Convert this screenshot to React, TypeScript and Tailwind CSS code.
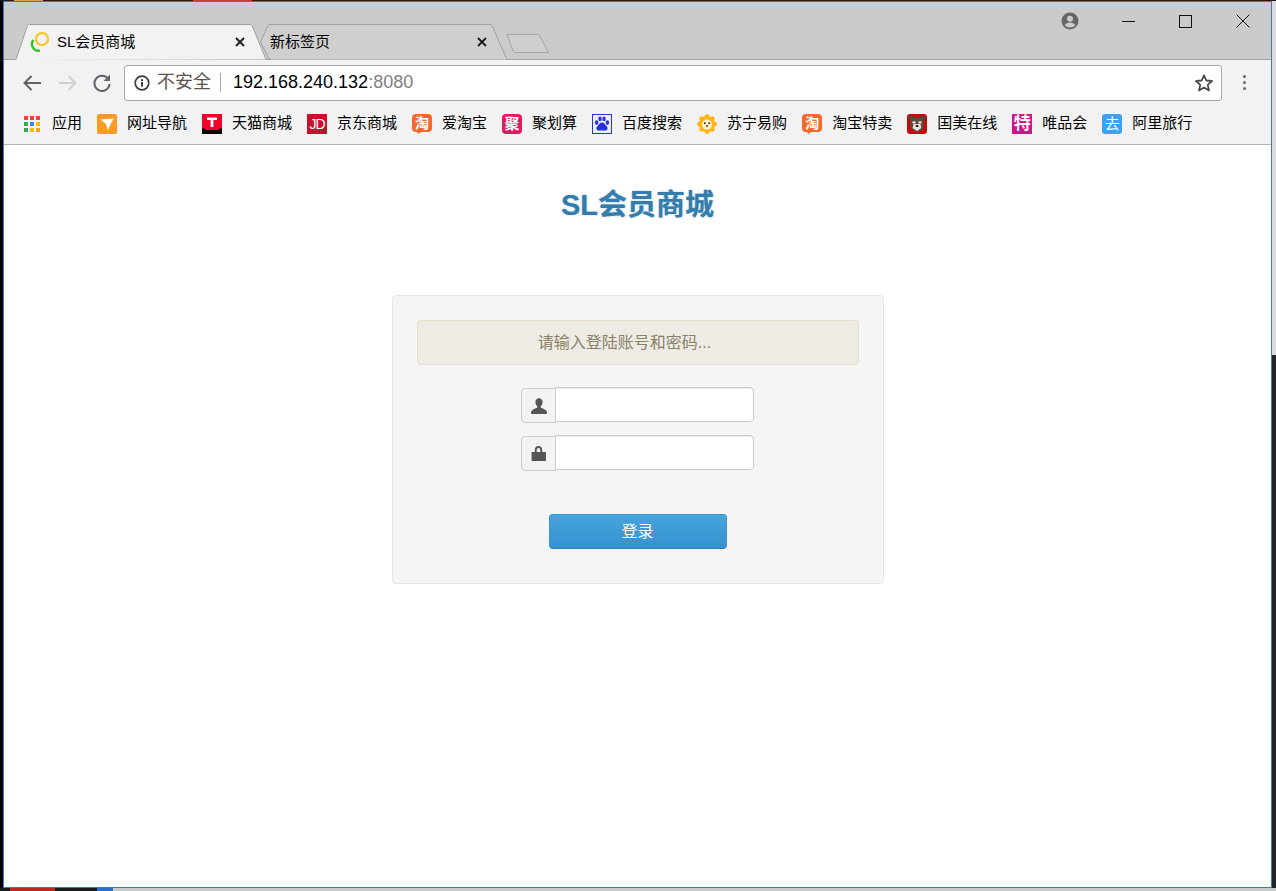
import type { ReactNode } from "react";

const CJK = "font-['Liberation_Sans','Noto_Sans_CJK_SC',sans-serif]";

function AppsIcon() {
  const colors = ["#e8453c", "#e8453c", "#e8453c", "#34a853", "#4285f4", "#fbbc05", "#34a853", "#fbbc05", "#f9a602"];
  return (
    <div className="grid h-4 w-4 grid-cols-3 gap-[2px]">
      {colors.map((c, i) => (
        <span key={i} style={{ background: c }} />
      ))}
    </div>
  );
}

function Square({ bg, children, className = "" }: { bg: string; children: ReactNode; className?: string }) {
  return (
    <div
      className={`flex h-5 w-5 items-center justify-center overflow-hidden font-bold leading-none text-white ${className}`}
      style={{ background: bg }}
    >
      {children}
    </div>
  );
}

function TaoIcon() {
  return (
    <div className="relative h-5 w-5">
      <div className="flex h-[18px] w-5 items-center justify-center rounded-[4px] bg-[#f5692c] text-[14px] font-bold leading-none text-white">淘</div>
      <svg className="absolute bottom-0 left-[5px]" width="6" height="3" viewBox="0 0 6 3">
        <path d="M0 0h6L1 3z" fill="#f5692c" />
      </svg>
    </div>
  );
}

function NavIcon() {
  return (
    <div className="h-5 w-5 rounded-[2px] bg-[#f99a26]">
      <svg width="20" height="20" viewBox="0 0 20 20">
        <path d="M3.500 5.500L16.500 4.500L10.500 16.500L9 10z" fill="#fff" />
      </svg>
    </div>
  );
}

function TmallIcon() {
  return (
    <div className="flex h-5 w-5 flex-col">
      <svg width="20" height="20" viewBox="0 0 20 20">
        <rect width="20" height="20" fill="#000" />
        <path d="M0 0h20v14l-3 1-1 1H4l-1-1-3-1z" fill="#f0022a" />
        <path d="M5 3.500h10v2.400h-3.600V13H8.600V5.900H5z" fill="#fff" />
      </svg>
    </div>
  );
}

function BaiduIcon() {
  return (
    <div className="h-5 w-5 border border-[#2932e1] bg-white">
      <svg width="18" height="18" viewBox="0 0 18 18">
        <rect width="18" height="18" fill="#eef0ff" />
        <g fill="#2932e1">
          <ellipse cx="3.600" cy="7.600" rx="1.700" ry="2.300" />
          <ellipse cx="7" cy="3.900" rx="1.700" ry="2.400" />
          <ellipse cx="11" cy="3.900" rx="1.700" ry="2.400" />
          <ellipse cx="14.400" cy="7.600" rx="1.700" ry="2.300" />
          <path d="M9 7.600c2 0 2.800 1.700 4 3 1.200 1.200 2 2.200 1.400 3.700-.6 1.300-2 1.600-3.300 1.300-1.400-.3-2.800-.3-4.200 0-1.300.3-2.700 0-3.300-1.300-.6-1.500.2-2.500 1.400-3.700 1.200-1.300 2-3 4-3z" />
        </g>
      </svg>
    </div>
  );
}

function SuningIcon() {
  return (
    <svg width="20" height="20" viewBox="0 0 20 20">
      <g fill="#fdb515">
        <circle cx="10" cy="10" r="7.500" />
        <circle cx="10" cy="2.800" r="2.600" />
        <circle cx="10" cy="17.200" r="2.600" />
        <circle cx="2.800" cy="10" r="2.600" />
        <circle cx="17.200" cy="10" r="2.600" />
        <circle cx="4.900" cy="4.900" r="2.600" />
        <circle cx="15.100" cy="4.900" r="2.600" />
        <circle cx="4.900" cy="15.100" r="2.600" />
        <circle cx="15.100" cy="15.100" r="2.600" />
      </g>
      <circle cx="10" cy="10.600" r="5" fill="#fff3d6" />
      <circle cx="7.800" cy="9.200" r="1" fill="#4a2c10" />
      <circle cx="12.200" cy="9.200" r="1" fill="#4a2c10" />
      <path d="M8.400 11.200h3.200L10 13.400z" fill="#8a3c10" />
    </svg>
  );
}

function GomeIcon() {
  return (
    <svg width="20" height="20" viewBox="0 0 20 20">
      <rect width="20" height="20" rx="3" fill="#c00d0d" />
      <circle cx="4.200" cy="4.200" r="2.400" fill="#5a4338" />
      <circle cx="15.800" cy="4.200" r="2.400" fill="#5a4338" />
      <path d="M4 4h12l1 6-2 6-5 2.500L5 16l-2-6z" fill="#5f4a40" />
      <path d="M6.500 10h7l.8 4-4.300 3-4.300-3z" fill="#ece4da" />
      <rect x="5.500" y="7.400" width="3" height="2" fill="#f2ece4" />
      <rect x="11.500" y="7.400" width="3" height="2" fill="#f2ece4" />
      <rect x="8.700" y="11" width="2.600" height="2" fill="#2a1c16" />
    </svg>
  );
}

const bookmarks: { label: string; icon: ReactNode }[] = [
  { label: "应用", icon: <AppsIcon /> },
  { label: "网址导航", icon: <NavIcon /> },
  { label: "天猫商城", icon: <TmallIcon /> },
  { label: "京东商城", icon: <Square bg="#c5112b" className="font-['Liberation_Sans'] text-[14px] font-normal tracking-[-1px] text-[#f6d5d8]">JD</Square> },
  { label: "爱淘宝", icon: <TaoIcon /> },
  { label: "聚划算", icon: <Square bg="#e5195f" className="rounded-[4px] text-[15px]">聚</Square> },
  { label: "百度搜索", icon: <BaiduIcon /> },
  { label: "苏宁易购", icon: <SuningIcon /> },
  { label: "淘宝特卖", icon: <TaoIcon /> },
  { label: "国美在线", icon: <GomeIcon /> },
  { label: "唯品会", icon: <Square bg="#d5118b" className="text-[17px]">特</Square> },
  { label: "阿里旅行", icon: <Square bg="#3f9ff0" className="rounded-[3px] text-[15px] font-normal">去</Square> },
];

function Favicon() {
  return (
    <svg width="22" height="20" viewBox="0 0 22 20" fill="none">
      <circle cx="13" cy="7" r="6" stroke="#f7c92a" strokeWidth="2.400" />
      <path d="M4.500 8A6.500 6.500 0 0 0 11 18.500" stroke="#35c52f" strokeWidth="2.400" />
    </svg>
  );
}

function CloseX() {
  return (
    <svg width="10" height="10" viewBox="0 0 10 10">
      <path d="M1 1l8 8M9 1l-8 8" stroke="#1a1a1a" strokeWidth="1.800" />
    </svg>
  );
}

function Tab({ active, title, fav }: { active?: boolean; title: string; fav?: ReactNode }) {
  return (
    <div className={`relative flex h-9 w-64 items-center ${active ? "z-10" : "-ml-4"}`}>
      <svg className="absolute inset-0" width="256" height="36" viewBox="0 0 256 36">
        {active ? (
          <path d="M0.500 36L1 35.500h3L15.500 1.500a2 2 0 0 1 2-1H238a2 2 0 0 1 2 1L254 35.500h2" fill="#f2f2f2" stroke="#a0a0a0" />
        ) : (
          <path d="M19 35.500a3 3 0 0 1-2.500-1.500L8.500 18 16 1.500a2 2 0 0 1 2-1H238a2 2 0 0 1 2 1L255 35.500" fill="#cfcfcf" stroke="#a0a0a0" />
        )}
      </svg>
      <div className={`relative flex flex-1 items-center text-[15px] text-black ${active ? "pl-[17px] pr-[23px]" : "pl-[18px] pr-[21px]"}`}>
        {fav && <span className="mr-[6px] flex">{fav}</span>}
        <span className="flex-1">{title}</span>
        <CloseX />
      </div>
    </div>
  );
}

function WinButton({ children, className = "" }: { children: ReactNode; className?: string }) {
  return <div className={`flex h-[38px] w-[57px] items-center justify-center ${className}`}>{children}</div>;
}

function TabStrip() {
  return (
    <div className="flex h-[58px] items-start justify-between border-b border-[#a3a3a3] bg-[#cbcbcb]">
      <div className="flex items-end pl-2 pt-[22px]">
        <Tab active title="SL会员商城" fav={<Favicon />} />
        <Tab title="新标签页" />
        <svg className="-ml-[2px] mb-[6px]" width="44" height="21" viewBox="0 0 44 21">
          <path d="M1 1.500h31a2 2 0 0 1 1.600 1L42.500 19.500H9a2 2 0 0 1-1.600-1z" fill="#cfcfcf" stroke="#a5a5a5" />
        </svg>
      </div>
      <div className="flex">
        <WinButton className="pr-1">
          <svg width="18" height="18" viewBox="0 0 18 18">
            <circle cx="9" cy="9" r="8.500" fill="#666" />
            <circle cx="9" cy="6.800" r="3" fill="#ccc" />
            <path d="M3.600 13c1.200-1.800 3.400-2.600 5.400-2.600s4.200.8 5.400 2.600A6.800 6.800 0 0 1 9 15.600 6.800 6.800 0 0 1 3.600 13z" fill="#ccc" />
          </svg>
        </WinButton>
        <WinButton>
          <div className="h-px w-[13px] bg-[#111]" />
        </WinButton>
        <WinButton>
          <div className="h-[13px] w-[13px] border border-[#111]" />
        </WinButton>
        <WinButton>
          <svg width="14" height="14" viewBox="0 0 14 14">
            <path d="M0.500 0.500l13 13M13.500 0.500l-13 13" stroke="#111" />
          </svg>
        </WinButton>
      </div>
    </div>
  );
}

function Toolbar() {
  return (
    <div className="flex h-[45px] items-center bg-[#f2f2f2] pl-[10px] pr-[25px]">
      <div className="flex w-[110px] items-center">
        <svg className="w-[36px]" width="22" height="18" viewBox="0 0 22 18" fill="none">
          <path d="M20 9H4M10.500 2L3.500 9l7 7" stroke="#5f6368" strokeWidth="2" />
        </svg>
        <svg className="w-[36px]" width="22" height="18" viewBox="0 0 22 18" fill="none">
          <path d="M2 9h16M11.500 2l7 7-7 7" stroke="#d0d0d0" strokeWidth="2" />
        </svg>
        <svg className="w-[32px]" width="20" height="20" viewBox="0 0 20 20" fill="none">
          <path d="M16.300 6A7.600 7.600 0 1 0 17.600 11" stroke="#5f6368" strokeWidth="2" />
          <path d="M18 1.500V8h-6.500z" fill="#5f6368" />
        </svg>
      </div>
      <div className="flex h-9 flex-1 items-center rounded-[3px] border border-[#a9a9a9] bg-white pl-[9px] pr-[7px]">
        <svg width="16" height="16" viewBox="0 0 16 16">
          <circle cx="8" cy="8" r="6.800" fill="none" stroke="#3c3c3c" strokeWidth="1.700" />
          <rect x="7" y="7" width="2" height="4.600" fill="#3c3c3c" />
          <rect x="7" y="4.200" width="2" height="1.900" fill="#3c3c3c" />
        </svg>
        <span className="ml-[7px] text-[18px] text-[#5b5350]">不安全</span>
        <span className="ml-[9px] mr-[12px] h-[19px] w-px bg-[#a9a9a9]" />
        <span className="flex-1 text-[18px]">
          <span className="text-black">192.168.240.132</span>
          <span className="text-[#808080]">:8080</span>
        </span>
        <svg width="20" height="20" viewBox="0 0 20 20" fill="none">
          <path d="M10 2.300l2.300 5.200 5.700.5-4.300 3.800 1.300 5.600-5-3-5 3 1.300-5.600L2 8l5.700-.5z" stroke="#4a4a4a" strokeWidth="1.800" strokeLinejoin="round" />
        </svg>
      </div>
      <div className="ml-[21px] flex flex-col gap-[3px]">
        <span className="h-[3px] w-[3px] rounded-full bg-[#666]" />
        <span className="h-[3px] w-[3px] rounded-full bg-[#666]" />
        <span className="h-[3px] w-[3px] rounded-full bg-[#666]" />
      </div>
    </div>
  );
}

function BookmarkBar() {
  return (
    <div className="flex h-10 items-center gap-[15px] border-b border-[#b3b3b3] bg-[#f2f2f2] pb-[2px] pl-[18px] text-[15px] text-black">
      {bookmarks.map((b) => (
        <div key={b.label} className="flex items-center gap-[10px]">
          <div className="flex h-5 w-5 items-center justify-center">{b.icon}</div>
          <span>{b.label}</span>
        </div>
      ))}
    </div>
  );
}

function InputRow({ icon }: { icon: ReactNode }) {
  return (
    <div className="flex items-start">
      <div className="mt-px flex h-[35px] w-[35px] items-center justify-center rounded-l-[4px] border border-[#cccccc] bg-[#f3f3f3]">
        {icon}
      </div>
      <input className="-ml-px h-[35px] w-[199px] rounded-r-[4px] border border-[#cccccc] bg-white shadow-[inset_0_1px_1px_rgba(0,0,0,0.075)]" />
    </div>
  );
}

function LoginPage() {
  return (
    <div className="flex flex-1 flex-col items-center bg-white pt-[40px]">
      <h1 className="text-[29px] font-bold leading-[40px] text-[#337cab] [text-shadow:0_0_2px_rgba(50,120,170,0.45)]">SL会员商城</h1>
      <div className="mt-[70px] flex h-[289px] w-[492px] flex-col items-center rounded-[4px] border border-[#e6e6e6] bg-[#f5f5f5] px-6 pt-6">
        <div className="flex h-[45px] w-full items-center justify-center rounded-[4px] border border-[#e3dfcb] bg-[#edebe3] pr-[26px] text-[16px] text-[#8a8068]">
          请输入登陆账号和密码...
        </div>
        <div className="mt-[22px] flex flex-col gap-3">
          <InputRow
            icon={
              <svg width="18" height="18" viewBox="0 0 16 16">
                <path d="M8 1c2 0 3.200 1.500 3.200 3.500 0 1.600-.7 3-1.600 3.800v1.300c1.600.6 4 1.300 5.400 3V15H1v-2.400c1.400-1.700 3.800-2.400 5.400-3V8.300C5.500 7.500 4.800 6.100 4.800 4.500 4.800 2.500 6 1 8 1z" fill="#555" />
              </svg>
            }
          />
          <InputRow
            icon={
              <svg width="17" height="17" viewBox="0 0 16 16">
                <path d="M4.500 6.500V4.600C4.500 2.500 6 1 8 1s3.500 1.500 3.500 3.600v1.900H15V15H1.500V6.500zM6.300 6.500h3.400V4.600C9.700 3.500 9 2.800 8 2.800s-1.700.7-1.700 1.800z" fill="#555" fillRule="evenodd" />
              </svg>
            }
          />
        </div>
        <button className="mt-[43px] h-[35px] w-[178px] rounded-[4px] border border-[#3a94d0] border-b-[#2a7fb8] bg-linear-to-b from-[#46a4dd] to-[#3691d0] text-[16px] text-white">
          登录
        </button>
      </div>
    </div>
  );
}

export default function App() {
  return (
    <div className={`flex h-[891px] w-[1276px] flex-col overflow-hidden bg-[#1c1c1c] ${CJK}`}>
      {/* top sliver of the desktop behind the window */}
      <div className="flex h-px">
        <span className="ml-[14px] w-[29px] bg-[#c8a860]" />
        <span className="ml-[150px] w-[59px] bg-[#c0394a]" />
      </div>
      <div className="flex flex-1">
        <div className="w-[3px] bg-black" />
        <div className="flex w-[1269px] flex-col border border-[#2f7fc1]">
          <TabStrip />
          <Toolbar />
          <BookmarkBar />
          <LoginPage />
        </div>
        <div className="flex w-1 flex-col">
          <div className="h-[354px] bg-[#dcdcdc]" />
          <div className="flex-1 bg-[#252525]" />
        </div>
      </div>
      {/* bottom sliver */}
      <div className="flex h-[3px]">
        <span className="ml-[10px] w-[45px] bg-[#c0281e]" />
        <span className="ml-[42px] w-[16px] bg-[#2a6fd0]" />
        <span className="w-[1163px] bg-[#c9c9c9]" />
      </div>
    </div>
  );
}
